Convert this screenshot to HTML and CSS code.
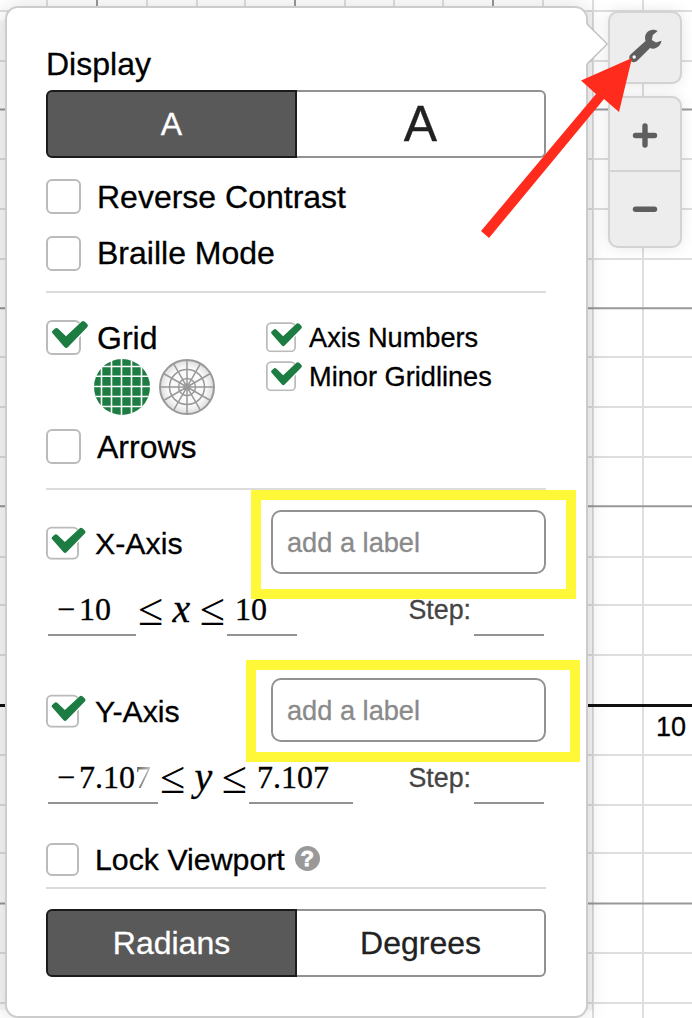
FILE: index.html
```html
<!DOCTYPE html>
<html lang="en">
<head>
<meta charset="utf-8">
<title>Graph Settings</title>
<link rel="stylesheet" href="styles.css">
</head>
<body>
<svg width="0" height="0" class="defs">
  <symbol id="check" viewBox="0 0 44 40">
    <rect x="1" y="6" width="33" height="33" rx="5" fill="#fff" stroke="#bbb" stroke-width="2"/>
    <path d="M10 18.500 20 28 38 11" fill="none" stroke="#fff" stroke-width="10"/>
    <path d="M6.500 18.300Q5.300 17 6.500 15.800L8.800 13.700Q10.500 12.200 12.200 13.700L20 21.200 35.500 6.800Q37.200 5.300 38.900 6.800L41.400 9.200Q42.600 10.800 41.200 12.200L21.800 32.200Q20.200 33.600 18.600 32.200Z" fill="#1d7c42"/>
  </symbol>
</svg>
<div class="app">
  <svg class="graph" width="692" height="1018">
    <g fill="none" stroke="#dedede" stroke-width="2">
      <path d="M0 11H692M0 61H692M0 159H692M0 209H692M0 259H692M0 357H692M0 407H692M0 457H692M0 557H692M0 605H692M0 655H692M0 755H692M0 805H692M0 853H692M0 953H692M0 1003H692"/>
      <path d="M47 0V1018M147 0V1018M197 0V1018M245 0V1018M345 0V1018M394 0V1018M443 0V1018M543 0V1018M593 0V1018M643 0V1018"/>
    </g>
    <path d="M0 109.500H692M0 308.300H692M0 506.300H692M0 903.500H692M97 0V1018M295 0V1018M493 0V1018" fill="none" stroke="#999" stroke-width="2"/>
    <path d="M0 705.500H692" stroke="#111" stroke-width="3"/>
    <rect x="587" y="10" width="6" height="1000" fill="#000" opacity=".045"/>
    <rect x="0" y="20" width="6" height="990" fill="#000" opacity=".04"/>
  </svg>
  <span class="tick">10</span>

  <nav class="tools">
    <div class="tool">
      <svg width="74" height="73"><path d="M22.500 43.500 37.500 30C36 24.500 38.500 20 43.500 19 46 18.500 48.500 19 49.500 20.300L44.800 24 43.800 29 48 31.500 53.500 29.800C52.500 35.500 47 39.300 42 37L29.500 49.500C27 52 23 51.500 21.800 48.800 21 47 21 45 22.500 43.500Z" fill="#5f5f5f"/><circle cx="26.200" cy="46" r="1.700" fill="#fff"/></svg>
    </div>
    <div class="zoom">
      <svg width="74" height="74"><path d="M25 39.500H49M37 27.500V51.500" stroke="#fff" stroke-width="0"/><path d="M27.500 39.500H46.500M37 30V49" stroke="#5f5f5f" stroke-width="5.400" stroke-linecap="round"/></svg>
      <svg width="74" height="78"><path d="M27.500 39.300H46.500" stroke="#5f5f5f" stroke-width="5.400" stroke-linecap="round"/></svg>
    </div>
  </nav>

  <main class="panel">
    <svg class="pointer" width="23" height="44"><path d="M0 2H1L21.500 22 1 42H0Z" fill="#fff"/><path d="M1 2 21.300 22 1 42" fill="none" stroke="#bbb" stroke-width="1.200"/></svg>
    <h1 class="title">Display</h1>
    <div class="toggle"><div class="on">A</div><div class="big">A</div></div>
    <label class="row reverse"><i class="box"></i>Reverse Contrast</label>
    <label class="row braille"><i class="box"></i>Braille Mode</label>
    <hr>
    <section class="grid">
      <div class="left">
        <label class="row"><svg class="check"><use href="#check"/></svg>Grid</label>
        <div class="kinds">
          <svg width="56" height="56"><circle cx="28" cy="28" r="28" fill="#1d7c42"/><path d="M7.500 8V48M17.500 2V54M27.500 0V56M37.500 2V54M47.500 8V48M8 7.500H48M2 17.300H54M0 27.500H56M2 37.500H54M8 47.500H48" stroke="#fff" stroke-width="1.600"/></svg>
          <svg width="56" height="56"><defs><radialGradient id="disc"><stop offset=".7" stop-color="#fafafa"/><stop offset="1" stop-color="#ddd"/></radialGradient></defs><circle cx="28" cy="28" r="27" fill="url(#disc)" stroke="#999" stroke-width="2"/><g fill="none" stroke="#999" stroke-width="1.500"><circle cx="28" cy="28" r="17.500"/><circle cx="28" cy="28" r="8.500"/><path d="M28 1V55M1 28H55M14.500 4.600 41.500 51.400M4.600 14.500 51.400 41.500M4.600 41.500 51.400 14.500M14.500 51.400 41.500 4.600"/></g><circle cx="28" cy="28" r="3.500" fill="#999"/></svg>
        </div>
        <label class="row arrows"><i class="box"></i>Arrows</label>
      </div>
      <div class="right">
        <label class="row small"><svg class="check"><use href="#check"/></svg>Axis Numbers</label>
        <label class="row small"><svg class="check"><use href="#check"/></svg>Minor Gridlines</label>
      </div>
    </section>
    <hr>
    <section class="axis">
      <div class="axis-head"><label class="row medium"><svg class="check"><use href="#check"/></svg>X-Axis</label><div class="field">add a label</div></div>
      <div class="range"><div class="num x-min"><span class="minus">−</span>10</div><div class="rel"><b>≤</b><em>x</em><b>≤</b></div><div class="num x-max">10</div><div class="step">Step:</div><div class="num step-num"></div></div>
    </section>
    <section class="axis y-axis">
      <div class="axis-head"><label class="row medium"><svg class="check"><use href="#check"/></svg>Y-Axis</label><div class="field">add a label</div></div>
      <div class="range"><div class="num y-min"><span class="minus">−</span>7.10<span class="faded">7</span></div><div class="rel"><b>≤</b><em>y</em><b>≤</b></div><div class="num y-max">7.107</div><div class="step">Step:</div><div class="num step-num"></div></div>
    </section>
    <label class="row medium lock"><i class="box"></i>Lock Viewport<span class="help">?</span></label>
    <hr class="last">
    <div class="toggle angle"><div class="on">Radians</div><div>Degrees</div></div>
  </main>

  <div class="mark mark-x"></div>
  <div class="mark mark-y"></div>
  <svg class="red-arrow" width="160" height="190"><path d="M1 181 116 44 101 30.500 152 8 139 62 124 49 9 188Z" fill="#ff2b1c"/></svg>
</div>
</body>
</html>
```
FILE: styles.css
```css
* { box-sizing: border-box; }
body { margin: 0; font-family: "Liberation Sans", Arial, sans-serif; color: #000; -webkit-text-stroke: .3px; }
svg { display: block; flex: none; -webkit-text-stroke: 0; }
.defs { position: absolute; }
.app { position: relative; width: 692px; height: 1018px; overflow: hidden; background: #fff; }
.graph { position: absolute; inset: 0; }
.tick { position: absolute; right: 6px; top: 711px; font-size: 27px; line-height: 32px; }

.tools { position: absolute; left: 608px; top: 11px; width: 74px; display: flex; flex-direction: column; gap: 12px; }
.tool, .zoom { background: #ededed; border-radius: 10px; box-shadow: inset 0 0 0 2px #d3d3d3, 0 0 14px rgba(0,0,0,.1); }
.zoom svg + svg { box-shadow: inset 0 2px #d3d3d3; }

.panel { position: absolute; left: 5px; top: 6px; width: 583px; height: 1012px; padding: 0 40px 0 39px; background: #fff; border: 2px solid #ccc; border-radius: 13px; box-shadow: 0 0 22px rgba(0,0,0,.13); }
.pointer { position: absolute; left: 579px; top: 14px; }
.title { margin: 0 0 6px; padding-top: 36px; font-size: 32px; line-height: 40px; font-weight: 400; }

.toggle { display: flex; height: 68px; width: 500px; font-size: 32px; text-align: center; line-height: 64px; color: #222; }
.toggle div { flex: 1; border: 2px solid #929292; border-left: 0; border-radius: 0 6px 6px 0; }
.toggle .on { flex: 0 0 251px; background: #595959; color: #fff; border: 2px solid #1b1b1b; border-radius: 6px 0 0 6px; }
.toggle .big { font-size: 50px; line-height: 65px; }

.row { display: flex; align-items: center; gap: 16px; height: 35px; font-size: 32px; line-height: 36px; white-space: nowrap; }
.box { flex: none; width: 35px; height: 35px; border: 2px solid #bbb; border-radius: 6px; }
.check { width: 44px; height: 40px; margin: -5px -9px 0 0; }
.reverse { margin-top: 21px; }
.braille { margin-top: 21px; height: 36px; }
hr { height: 2px; width: 500px; margin: 20px 0 0; border: 0; background: #dcdcdc; }

.grid { display: flex; height: 175px; padding-top: 27px; }
.left { width: 220px; }
.kinds { display: flex; gap: 9px; margin: 4px 0 14px 48px; }
.right { padding-top: 3px; display: flex; flex-direction: column; gap: 9px; }
.small { height: 30px; font-size: 27.200px; gap: 13px; }
.small .check { width: 37.700px; height: 34.300px; margin: -5px -7.700px 0 0; }

.axis { padding-top: 20px; }
.axis-head { display: flex; justify-content: space-between; align-items: center; height: 64px; }
.medium { font-size: 30.300px; }
.medium .box { width: 33px; height: 33px; margin-right: 0; }
.medium .check { width: 41.500px; height: 37.700px; margin: -5px -8.500px 0 0; }
.axis .medium { padding-top: 3px; }
.field { width: 275px; height: 64px; padding-left: 14px; border: 2px solid #929292; border-radius: 10px; font-size: 27.200px; line-height: 62px; color: #8a8a8a; }
.range { display: flex; align-items: flex-end; height: 62px; padding: 0 2px; font-family: "Liberation Serif", "Times New Roman", serif; }
.num { height: 44px; padding-left: 8px; font-size: 32px; line-height: 35px; border-bottom: 2px solid #929292; white-space: nowrap; }
.minus { margin: 0 4px 0 1px; }
.x-min { width: 88px; }
.x-max { width: 70px; }
.y-min { width: 110px; }
.faded { color: transparent; background: linear-gradient(90deg, #555, #ccc); -webkit-background-clip: text; background-clip: text; -webkit-text-stroke: 0; }
.y-max { width: 104px; }
.rel { width: 91px; height: 44px; display: flex; justify-content: space-between; padding: 0 2px; line-height: 34px; }
.rel b { font-weight: 400; font-size: 46px; line-height: 36px; -webkit-text-stroke: 0; }
.rel em { font-size: 40px; line-height: 33px; }
.step { margin-left: auto; margin-right: 3px; height: 44px; font: 26.800px/36px "Liberation Sans", Arial, sans-serif; color: #444; }
.step-num { width: 70px; }
.y-axis { padding-top: 42px; }
.lock { height: 33px; margin-top: 39px; }
.help { width: 25px; height: 25px; margin: -3px 0 0 -6px; border-radius: 50%; background: #999; color: #fff; font-size: 22px; font-weight: 700; line-height: 25px; text-align: center; -webkit-text-stroke: .8px; }
.last { margin-top: 11px; }
.angle { margin-top: 20px; }

.mark { position: absolute; border: 10px solid #fff838; }
.mark-x { left: 251px; top: 490px; width: 325px; height: 109px; }
.mark-y { left: 246px; top: 660px; width: 334px; height: 102px; }
.red-arrow { position: absolute; left: 480px; top: 50px; }
```
